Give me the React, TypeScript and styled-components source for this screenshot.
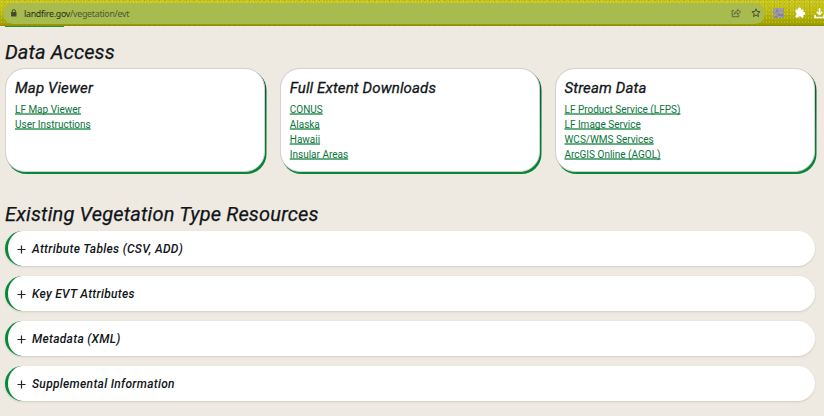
import React from "react";
import styled, { createGlobalStyle } from "styled-components";

const Global = createGlobalStyle`
  * { box-sizing: border-box; }
  body { margin: 0; background: #eeeae2; overflow: hidden; font-family: Roboto, sans-serif; color: #111518; }
`;

const Page = styled.div`
  height: 416px;
  overflow: hidden;
  background: #eeeae2;
`;

const BrowserBar = styled.header`
  display: flex;
  align-items: center;
  height: 26px;
  padding: 1px 0 0 3px;
  border-bottom: 1px solid #8d9000;
  background:
    radial-gradient(circle, rgba(235, 225, 60, 0.4) 0 0.5px, transparent 1px) 0 0 / 3px 4px,
    radial-gradient(circle, rgba(95, 105, 0, 0.25) 0 0.5px, transparent 1px) 2px 2px / 5px 3px,
    radial-gradient(circle, rgba(95, 105, 0, 0.2) 0 0.5px, transparent 1px) 1px 3px / 7px 5px,
    linear-gradient(#cac621, #b9b810 55%, #9b9d00);
`;

const AddressBar = styled.div`
  display: flex;
  align-items: center;
  width: 765px;
  height: 21px;
  padding: 0 4px 0 7px;
  border-radius: 11px;
  background: #a8bb4e;
`;

const Url = styled.span`
  flex: 1;
  margin-left: 6px;
  font: 8.8px/20px "Noto Sans", sans-serif;
  letter-spacing: -0.26px;
  padding-top: 1px;
  color: #4c5632;
`;

const Host = styled.span`
  color: #262c1c;
`;

const BarIcon = styled.svg<{ $left?: number }>`
  flex: none;
  display: block;
  margin-left: ${(p) => p.$left ?? 0}px;
`;

const TabMarker = styled.div`
  width: 59px;
  height: 1px;
  margin-left: 5px;
  background: #2f9238;
`;

const Content = styled.main`
  padding: 0 9px 0 5px;
`;

const SectionTitle = styled.h2<{ $top: number; $spacing: number }>`
  margin: ${(p) => p.$top}px 0 0;
  height: 30px;
  font: italic 400 20px/30px Roboto, sans-serif;
  -webkit-text-stroke: 0.25px currentColor;
  letter-spacing: ${(p) => p.$spacing}px;
  white-space: nowrap;
`;

const Cards = styled.div`
  display: grid;
  grid-template-columns: repeat(3, 261.75px);
  column-gap: 13px;
  margin-top: 1px;
`;

const Card = styled.section`
  position: relative;
  isolation: isolate;
  width: 260px;
  height: 104px;
  padding: 9px 9px 0;
  border: 1px solid #d3d2cd;
  border-radius: 20px;
  background: #fff;

  &::before,
  &::after {
    content: "";
    position: absolute;
    inset: -1px;
    border-radius: 20px;
  }
  &::before {
    z-index: -2;
    transform: translate(1.5px, 2px);
    background: linear-gradient(#04592a, #07883a);
  }
  &::after {
    z-index: -1;
    border: 1px solid #d3d2cd;
    background: #fff;
  }
`;

const CardTitle = styled.h3`
  margin: 0 0 4px;
  font: italic 400 15px/20px Roboto, sans-serif;
  -webkit-text-stroke: 0.3px currentColor;
  letter-spacing: 0.14px;
`;

const Links = styled.ul`
  margin: 0;
  padding: 0;
  list-style: none;
`;

const LinkItem = styled.li`
  height: 15px;
  font-size: 10px;
  line-height: 15px;
`;

const Link = styled.a`
  color: #087439;
  text-decoration: underline;
  text-decoration-color: #65ad83;
  text-decoration-thickness: 2px;
  text-underline-offset: 0;
  text-decoration-skip-ink: none;
`;

const Accordion = styled.div`
  display: grid;
  row-gap: 10px;
  margin-top: 2px;
`;

const AccordionRow = styled.button`
  display: flex;
  align-items: center;
  height: 35px;
  padding: 1px 0 0 9px;
  border: 0;
  border-left: 3px solid #078838;
  border-radius: 18px;
  background: #fff;
  box-shadow: 0 1px 2px rgba(80, 70, 50, 0.18);
  color: #111518;
  font: italic 500 12px/18px Roboto, sans-serif;
  letter-spacing: 0.3px;
`;

const Plus = styled.svg`
  display: block;
  margin-right: 6px;
`;

const cards = [
  { title: "Map Viewer", links: ["LF Map Viewer", "User Instructions"] },
  { title: "Full Extent Downloads", links: ["CONUS", "Alaska", "Hawaii", "Insular Areas"] },
  {
    title: "Stream Data",
    links: ["LF Product Service (LFPS)", "LF Image Service", "WCS/WMS Services", "ArcGIS Online (AGOL)"],
  },
];

const resources = [
  "Attribute Tables (CSV, ADD)",
  "Key EVT Attributes",
  "Metadata (XML)",
  "Supplemental Information",
];

export default function App() {
  return (
    <Page>
      <Global />
      <BrowserBar>
        <AddressBar>
          <BarIcon width="8" height="10" viewBox="0 0 8 10">
            <path d="M2.2 5V3.2a1.6 1.6 0 0 1 3.2 0V5" fill="none" stroke="#414935" />
            <rect x="1.1" y="4" width="5.4" height="4.6" rx=".6" fill="#414935" />
          </BarIcon>
          <Url>
            <Host>landfire.gov</Host>/vegetation/evt
          </Url>
          <BarIcon width="11" height="10" viewBox="0 0 11 10" fill="none" stroke="#5f6b3e">
            <path d="M3 2.5H1.2v6.2h6.6V7" />
            <path d="M3 6.5c.3-2.2 1.5-3.2 3.5-3.3V1.3L9.7 4 6.5 6.6V5C5 5 4 5.3 3 6.5Z" />
          </BarIcon>
          <BarIcon $left={9} width="10" height="10" viewBox="0 0 10 10" fill="none" stroke="#444e34">
            <path d="m5 .8 1.1 2.7 3 .2-2.3 1.9.7 3L5 7 2.5 8.600l.7-3L.9 3.700l3-.2Z" />
          </BarIcon>
        </AddressBar>
        <BarIcon $left={8} width="11" height="10" viewBox="0 0 11 10">
          <path d="M0 0h11v10H0z" fill="#96949a" />
          <path d="M0 1h3M5 1h5M1 3h2M6 4h3" stroke="#aaa8ad" />
          <path d="M3 3h2M5 7h5M2 9h2" stroke="#72717a" />
          <path d="M0 7h3M7 5h3M5 9h3" stroke="#aaa8ae" />
        </BarIcon>
        <BarIcon $left={9} width="12" height="12" viewBox="0 0 12 12">
          <path
            d="M1.5 2.5H4a1.5 1.5 0 1 1 2.900 0h2.500V5a1.500 1.500 0 1 1 0 2.900v2.700H7.200a1.300 1.300 0 0 0-2.600 0H1.500V8a1.300 1.300 0 0 0 0-2.600Z"
            fill="#fff"
            transform="translate(1 0)"
          />
        </BarIcon>
        <BarIcon $left={8} width="11" height="11" viewBox="0 0 11 11" fill="none" stroke="#fff" strokeWidth="1.5">
          <path d="M6.500 0v6M3.700 3.700l2.800 2.800 2.800-2.800M2 7v2.500h9V7" />
        </BarIcon>
      </BrowserBar>
      <TabMarker />
      <Content>
        <SectionTitle $top={10} $spacing={0.14}>Data Access</SectionTitle>
        <Cards>
          {cards.map((card) => (
            <Card key={card.title}>
              <CardTitle>{card.title}</CardTitle>
              <Links>
                {card.links.map((label) => (
                  <LinkItem key={label}>
                    <Link>{label}</Link>
                  </LinkItem>
                ))}
              </Links>
            </Card>
          ))}
        </Cards>
        <SectionTitle $top={27} $spacing={0.18}>Existing Vegetation Type Resources</SectionTitle>
        <Accordion>
          {resources.map((label) => (
            <AccordionRow key={label}>
              <Plus width="9" height="9" viewBox="0 0 9 9">
                <path d="M4.500 .5v8M.5 4.500h8" stroke="#20252a" strokeWidth="1.2" />
              </Plus>
              {label}
            </AccordionRow>
          ))}
        </Accordion>
      </Content>
    </Page>
  );
}
